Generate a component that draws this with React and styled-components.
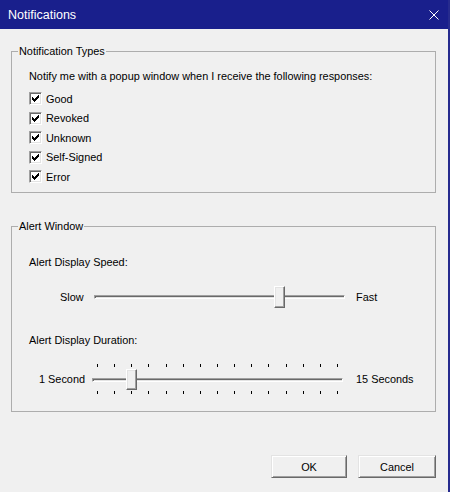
import React from "react";
import styled, { createGlobalStyle } from "styled-components";

const Global = createGlobalStyle`
  html, body { margin: 0; padding: 0; background: #f0f0f0; overflow: hidden; }
  * { box-sizing: border-box; }
`;

const Window = styled.div`
  width: 450px;
  height: 492px;
  background: #f0f0f0;
  border-right: 2px solid #262b8e;
  display: flex;
  flex-direction: column;
  font-family: "Liberation Sans", Arial, sans-serif;
  font-size: 10.9px;
  color: #000;
`;

const TitleBar = styled.div`
  height: 29px;
  flex: none;
  background: #191f8c;
  color: #fff;
  display: flex;
  align-items: center;
  justify-content: space-between;
  padding: 0 9px 0 8px;
  font-size: 12.5px;
`;

const CloseIcon = styled.svg`
  width: 10px;
  height: 10px;
  display: block;
`;

const Body = styled.div`
  padding: 16px 12px 0 11px;
  display: flex;
  flex-direction: column;
`;

const Group = styled.fieldset`
  margin: ${(p) => p.$mt || 0}px 0 0 0;
  padding: 0;
  border: 1px solid #adadad;
  min-width: 0;
`;

const Legend = styled.legend`
  margin-left: 6px;
  padding: 0 1px;
  line-height: 13px;
`;

const GroupContent = styled.div`
  padding: ${(p) => p.$pad};
  display: flex;
  flex-direction: column;
`;

const Text = styled.div`
  line-height: 13px;
  margin-top: ${(p) => p.$mt || 0}px;
  white-space: nowrap;
`;

const CheckList = styled.div`
  margin-top: 6px;
  display: flex;
  flex-direction: column;
`;

const CheckRow = styled.label`
  height: 19.5px;
  display: flex;
  align-items: center;
  gap: 4px;
`;

const Box = styled.span`
  width: 13px;
  height: 13px;
  flex: none;
  background: #fff;
  border-top: 1px solid #a0a0a0;
  border-left: 1px solid #a0a0a0;
  border-right: 1px solid #fff;
  border-bottom: 1px solid #fff;
  box-shadow: inset 1px 1px 0 #696969, inset -1px -1px 0 #e3e3e3;
  display: flex;
  align-items: center;
  justify-content: center;
`;

const CheckGlyph = () => (
  <svg width="7" height="7" viewBox="0 0 7 7" shapeRendering="crispEdges">
    <rect x="6" y="0" width="1" height="1" fill="#000" />
    <rect x="5" y="1" width="2" height="1" fill="#000" />
    <rect x="0" y="2" width="1" height="1" fill="#000" />
    <rect x="4" y="2" width="3" height="1" fill="#000" />
    <rect x="0" y="3" width="2" height="1" fill="#000" />
    <rect x="3" y="3" width="3" height="1" fill="#000" />
    <rect x="0" y="4" width="5" height="1" fill="#000" />
    <rect x="1" y="5" width="3" height="1" fill="#000" />
    <rect x="2" y="6" width="1" height="1" fill="#000" />
  </svg>
);

const SliderRow = styled.div`
  margin-top: ${(p) => p.$mt}px;
  display: flex;
  align-items: center;
`;

const SideLabel = styled.div`
  width: ${(p) => p.$w}px;
  padding-left: ${(p) => p.$pl}px;
  flex: none;
  line-height: 13px;
  white-space: nowrap;
`;

const EndLabel = styled.div`
  margin-left: ${(p) => p.$ml}px;
  line-height: 13px;
  white-space: nowrap;
`;

const SliderBody = styled.div`
  width: ${(p) => p.$w}px;
  flex: none;
  display: flex;
  flex-direction: column;
`;

const TickRow = styled.div`
  height: 3px;
  margin: ${(p) => p.$m};
  display: flex;
  justify-content: space-between;
  padding: 0 5px;
`;

const Tick = styled.span`
  width: 1px;
  height: 3px;
  background: #000;
`;

const TrackArea = styled.div`
  position: relative;
  height: ${(p) => p.$h}px;
  display: flex;
  align-items: center;
`;

const Channel = styled.div`
  width: 100%;
  height: 4px;
  border-top: 1px solid #a0a0a0;
  border-left: 1px solid #a0a0a0;
  border-bottom: 1px solid #fff;
  border-right: 1px solid #fff;
  background: #e3e3e3;
  box-shadow: inset 1px 1px 0 #696969;
`;

const Thumb = styled.div`
  position: absolute;
  top: 0;
  width: 11px;
  height: 100%;
  background: #f0f0f0;
  border-top: 1px solid #fff;
  border-left: 1px solid #fff;
  border-right: 1px solid #696969;
  border-bottom: 1px solid #696969;
  box-shadow: inset -1px -1px 0 #a0a0a0, inset 1px 1px 0 #e3e3e3;
`;

function Slider({ width, value, max, height, ticks }) {
  const usable = width - 11;
  const left = (value / max) * usable;
  const area = (
    <TrackArea $h={height}>
      <Channel />
      <Thumb style={{ left: `${left}px` }} />
    </TrackArea>
  );
  if (!ticks) return <SliderBody $w={width}>{area}</SliderBody>;
  const list = Array.from({ length: ticks });
  return (
    <SliderBody $w={width}>
      <TickRow $m="0 0 2px 0">
        {list.map((_, i) => (
          <Tick key={i} />
        ))}
      </TickRow>
      {area}
      <TickRow $m="1px 0 0 0">
        {list.map((_, i) => (
          <Tick key={i} />
        ))}
      </TickRow>
    </SliderBody>
  );
}

const ButtonBar = styled.div`
  margin-top: 43px;
  display: flex;
  justify-content: flex-end;
  gap: 11px;
`;

const Button = styled.button`
  width: ${(p) => p.$w}px;
  height: 23px;
  padding: 0;
  font-family: "Liberation Sans", Arial, sans-serif;
  font-size: 10.9px;
  color: #000;
  background: #f0f0f0;
  border-top: 1px solid #e3e3e3;
  border-left: 1px solid #e3e3e3;
  border-right: 1px solid #696969;
  border-bottom: 1px solid #696969;
  box-shadow: inset 1px 1px 0 #fff, inset -1px -1px 0 #a0a0a0;
`;

const types = ["Good", "Revoked", "Unknown", "Self-Signed", "Error"];

export default function App() {
  return (
    <>
      <Global />
      <Window>
        <TitleBar>
          <span>Notifications</span>
          <CloseIcon viewBox="0 0 10 10">
            <path d="M0.5 0.5 L9.5 9.5 M9.5 0.5 L0.5 9.5" stroke="#fff" strokeWidth="1" />
          </CloseIcon>
        </TitleBar>
        <Body>
          <Group>
            <Legend>Notification Types</Legend>
            <GroupContent $pad="12px 0 5.5px 17px">
              <Text>Notify me with a popup window when I receive the following responses:</Text>
              <CheckList>
                {types.map((t) => (
                  <CheckRow key={t}>
                    <Box>
                      <CheckGlyph />
                    </Box>
                    {t}
                  </CheckRow>
                ))}
              </CheckList>
            </GroupContent>
          </Group>
          <Group $mt={27}>
            <Legend>Alert Window</Legend>
            <GroupContent $pad="23px 0 17px 17px">
              <Text>Alert Display Speed:</Text>
              <SliderRow $mt={17}>
                <SideLabel $w={65} $pl={31}>Slow</SideLabel>
                <Slider width={251} value={3} max={4} height={22} />
                <EndLabel $ml={11}>Fast</EndLabel>
              </SliderRow>
              <Text $mt={26}>Alert Display Duration:</Text>
              <SliderRow $mt={17}>
                <SideLabel $w={63} $pl={10}>1 Second</SideLabel>
                <Slider width={251} value={2} max={14} height={21} ticks={15} />
                <EndLabel $ml={13}>15 Seconds</EndLabel>
              </SliderRow>
            </GroupContent>
          </Group>
          <ButtonBar>
            <Button $w={76}>OK</Button>
            <Button $w={78}>Cancel</Button>
          </ButtonBar>
        </Body>
      </Window>
    </>
  );
}
